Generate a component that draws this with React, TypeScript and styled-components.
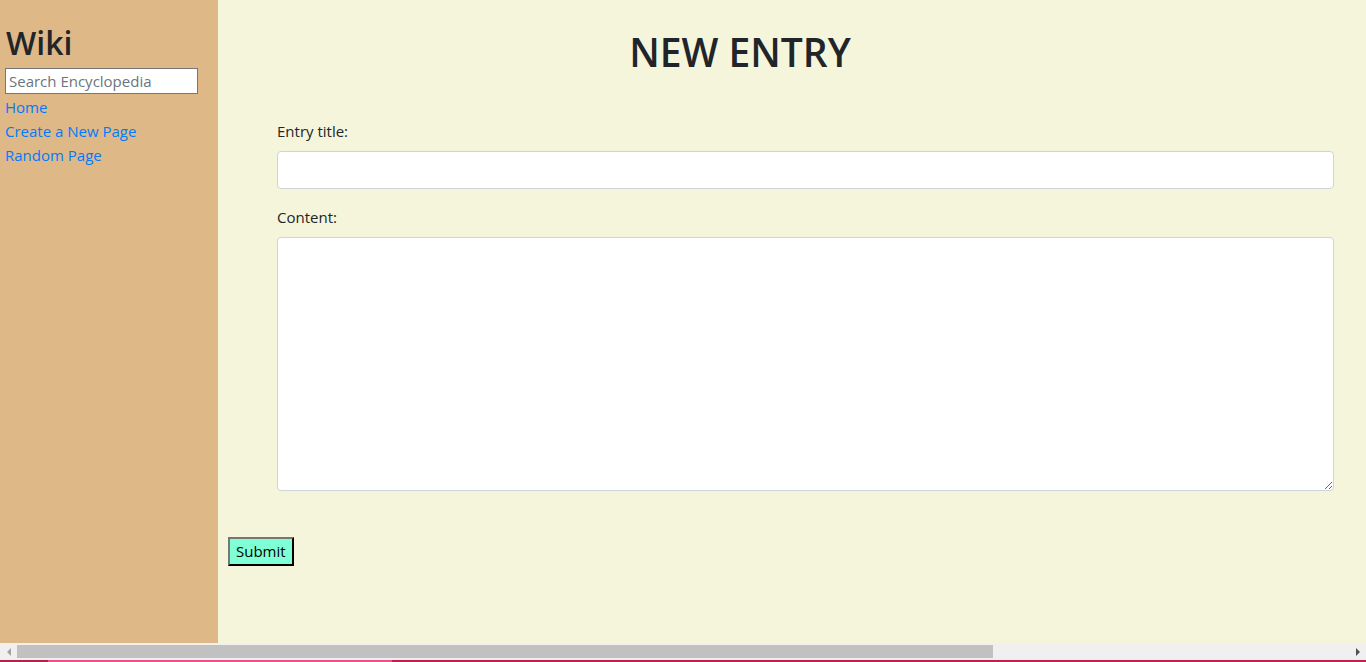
import styled, { createGlobalStyle } from "styled-components";

const GlobalStyle = createGlobalStyle`
    html, body {
        margin: 0;
        padding: 0;
        overflow: hidden;
    }
    body {
        font-family: "Open Sans", "Noto Sans", sans-serif;
        font-size: 16px;
        color: #212529;
    }
`

const Page = styled.div`
    display: flex;
    flex-direction: column;
    width: 1366px;
    height: 662px;
`

const Row = styled.div`
    display: flex;
    flex: 1;
    min-height: 0;
`

const Sidebar = styled.div`
    width: 218px;
    flex-shrink: 0;
    background-color: #deb887;
    padding: 24px 5px 0 5px;
    box-sizing: border-box;
`

const Brand = styled.h2`
    margin: 0 0 6px 1px;
    font-size: 32px;
    font-weight: 600;
    line-height: 1.2;
`

const SearchInput = styled.input`
    display: block;
    width: 193px;
    height: 26px;
    box-sizing: border-box;
    border: 1px solid #767676;
    padding: 1px 3px;
    font-family: inherit;
    font-size: 15px;
    margin-bottom: 1px;
    &::placeholder {
        color: #6c757d;
    }
`

const NavLink = styled.a`
    display: block;
    color: #007bff;
    text-decoration: none;
    font-size: 15px;
    line-height: 24px;
`

const Main = styled.div`
    flex: 1;
    background-color: #f5f5dc;
    padding: 1px 32px 0 10px;
`

const Title = styled.h1`
    margin: 27px 82px 43px 0;
    text-align: center;
    font-size: 39px;
    font-weight: 600;
    line-height: 48px;
`

const Fields = styled.div`
    margin-left: 49px;
`

const Group = styled.div`
    margin-bottom: 16px;
`

const Label = styled.label`
    display: block;
    margin-bottom: 8px;
    font-size: 15px;
    line-height: 24px;
`

const Control = styled.input`
    display: block;
    width: 100%;
    height: 38px;
    box-sizing: border-box;
    border: 1px solid #ced4da;
    border-radius: 4px;
    background: #fff;
`

const Area = styled.textarea`
    display: block;
    width: 100%;
    height: 254px;
    box-sizing: border-box;
    border: 1px solid #ced4da;
    border-radius: 4px;
    background: #fff;
`

const SubmitButton = styled.button`
    margin-top: 30px;
    background-color: #7fffd4;
    border: 2px outset #767676;
    border-color: #767676 #222 #222 #767676;
    padding: 2px 6px;
    font-family: inherit;
    font-size: 15px;
    line-height: 21px;
    color: #000;
`

const Scrollbar = styled.div`
    display: flex;
    align-items: center;
    height: 17px;
    background: #f0f0f0;
`

const Arrow = styled.div<{ $dir: "left" | "right" }>`
    width: 17px;
    height: 17px;
    display: flex;
    align-items: center;
    justify-content: center;
    &::before {
        content: "";
        border-top: 4px solid transparent;
        border-bottom: 4px solid transparent;
        ${(p) => p.$dir === "left" ? "border-right: 4px solid #a3a3a3;" : "border-left: 4px solid #505050;"}
    }
`

const Track = styled.div`
    flex: 1;
    height: 13px;
    display: flex;
`

const Thumb = styled.div`
    background: #c1c1c1;
    height: 100%;
`

const Strip = styled.div`
    display: flex;
    height: 2px;
`

const StripPart = styled.div<{ $w: string; $c: string }>`
    width: ${(p) => p.$w};
    background: ${(p) => p.$c};
`

function App() {
    return (
        <Page>
            <GlobalStyle />
            <Row>
                <Sidebar>
                    <Brand>Wiki</Brand>
                    <SearchInput placeholder="Search Encyclopedia" />
                    <NavLink href="#">Home</NavLink>
                    <NavLink href="#">Create a New Page</NavLink>
                    <NavLink href="#">Random Page</NavLink>
                </Sidebar>
                <Main>
                    <Title>NEW ENTRY</Title>
                    <Fields>
                        <Group>
                            <Label>Entry title:</Label>
                            <Control />
                        </Group>
                        <Group>
                            <Label>Content:</Label>
                            <Area />
                        </Group>
                    </Fields>
                    <SubmitButton>Submit</SubmitButton>
                </Main>
            </Row>
            <Scrollbar>
                <Arrow $dir="left" />
                <Track>
                    <Thumb style={{ width: `${(976 / 1332) * 100}%` }} />
                </Track>
                <Arrow $dir="right" />
            </Scrollbar>
            <Strip>
                <StripPart $w="48px" $c="#b3214d" />
                <StripPart $w="344px" $c="#f0508a" />
                <StripPart $w="974px" $c="#c21e4f" />
            </Strip>
        </Page>
    );
}

export default App;
